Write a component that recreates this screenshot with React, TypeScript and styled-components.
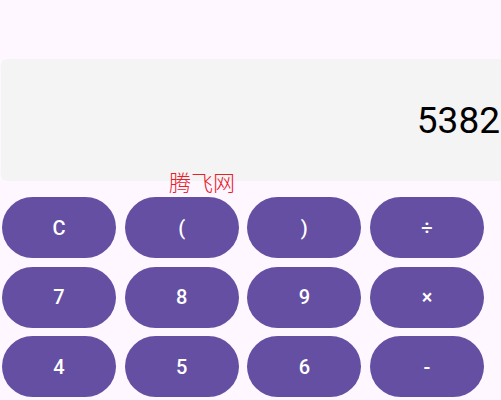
import React from 'react';
import styled, { createGlobalStyle } from 'styled-components';

const GlobalStyle = createGlobalStyle`
    html, body {
        margin: 0;
        padding: 0;
        background: #fef7ff;
        overflow: hidden;
        font-family: Roboto, 'Noto Sans', sans-serif;
    }
`

const keys = [
    ['C', '(', ')', '÷'],
    ['7', '8', '9', '×'],
    ['4', '5', '6', '-'],
];

export default function App() {
    return (
        <>
            <GlobalStyle/>
            <Screen>
                <Display>
                    <Value>5382</Value>
                </Display>
                <Brand>腾飞网</Brand>
                <Keypad>
                    {keys.flat().map((k, i) => (
                        <Key key={i}>{k}</Key>
                    ))}
                </Keypad>
            </Screen>
        </>
    );
}

const Screen = styled.div`
    position: relative;
    padding-top: 59px;
    display: flex;
    flex-direction: column;
`

const Display = styled.div`
    margin-left: 1px;
    height: 122px;
    background: #f4f4f4;
    border-radius: 6px 0 0 6px;
    display: flex;
    align-items: center;
    justify-content: flex-end;
    padding-right: 1px;
`

const Value = styled.span`
    font-size: 37px;
    color: #000;
`

const Brand = styled.span`
    position: absolute;
    left: 169px;
    top: 165px;
    font-family: 'Noto Sans CJK SC', sans-serif;
    font-size: 22px;
    font-weight: 300;
    color: #e8202c;
`

const Keypad = styled.div`
    display: grid;
    grid-template-columns: repeat(4, 114px);
    grid-auto-rows: 61px;
    column-gap: 8.67px;
    row-gap: 8.5px;
    padding: 16px 0 0 2px;
`

const Key = styled.button`
    border: none;
    border-radius: 31px;
    background: #654fa2;
    color: #fff;
    font-family: Roboto, sans-serif;
    font-size: 20px;
    font-weight: 500;
    padding: 0;
`
